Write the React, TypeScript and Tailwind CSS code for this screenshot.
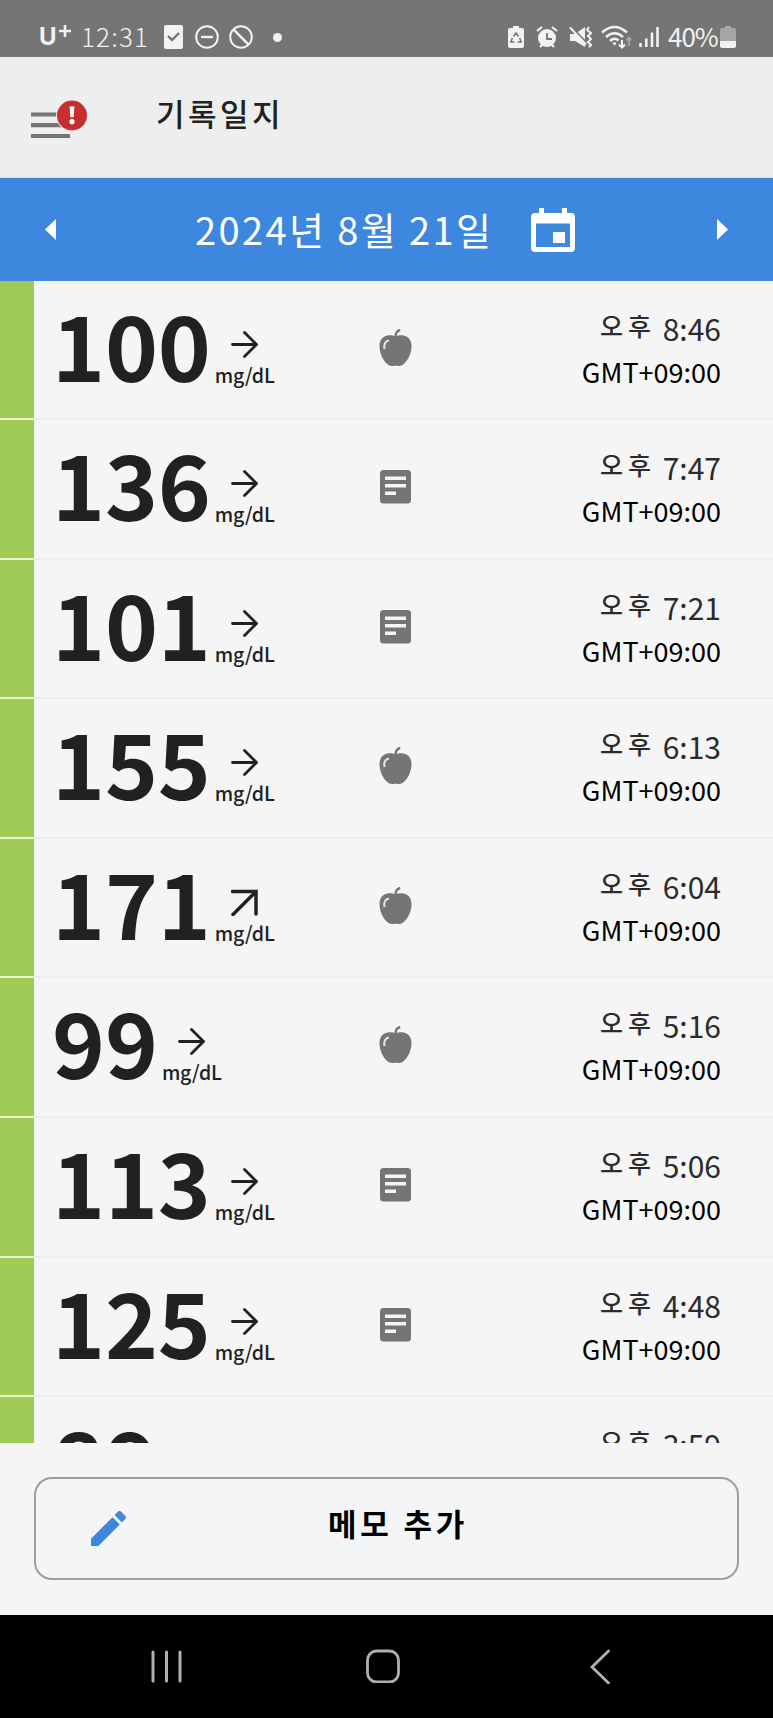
import React from 'react';

type Trend = 'flat' | 'up';
type Kind = 'food' | 'note';

interface Reading {
  value: number;
  trend: Trend;
  kind: Kind;
  time: string;
}

const readings: Reading[] = [
  { value: 100, trend: 'flat', kind: 'food', time: '8:46' },
  { value: 136, trend: 'flat', kind: 'note', time: '7:47' },
  { value: 101, trend: 'flat', kind: 'note', time: '7:21' },
  { value: 155, trend: 'flat', kind: 'food', time: '6:13' },
  { value: 171, trend: 'up', kind: 'food', time: '6:04' },
  { value: 99, trend: 'flat', kind: 'food', time: '5:16' },
  { value: 113, trend: 'flat', kind: 'note', time: '5:06' },
  { value: 125, trend: 'flat', kind: 'note', time: '4:48' },
  { value: 89, trend: 'flat', kind: 'food', time: '3:59' },
];

function StatusBar() {
  return (
    <div className="h-[57px] shrink-0 bg-[#757575] text-[#f2f2f2] flex items-start pl-[39px] pr-[37px] pt-[23px]">
      <div className="flex h-7 items-center">
        <span className="font-['Inter'] w-[20px] text-[24px] font-bold leading-7">U</span>
        <svg className="-mt-3 w-[12px] h-[12px]" viewBox="0 0 12 12" stroke="currentColor" strokeWidth="2.6">
          <path d="M6 0v12M0 6h12" />
        </svg>
        <span className="-mt-[3px] ml-[10px] w-[66px] text-[26px] font-light leading-7 tracking-[1.2px]">12:31</span>
        <svg className="ml-[17px] w-[19px] h-6" viewBox="0 0 19 24">
          <rect width="19" height="24" rx="2" fill="currentColor" />
          <path d="M4 11l4 4 7-7" fill="none" stroke="#757575" strokeWidth="2.4" />
        </svg>
        <svg className="ml-[12px] w-6 h-6" viewBox="0 0 24 24" fill="none" stroke="currentColor" strokeWidth="2">
          <circle cx="12" cy="12" r="10.8" />
          <path d="M6 12h12" strokeWidth="2.4" />
        </svg>
        <svg className="ml-[10px] w-6 h-6" viewBox="0 0 24 24" fill="none" stroke="currentColor" strokeWidth="2">
          <circle cx="12" cy="12" r="10.8" />
          <path d="M4.4 4.4l15.2 15.2" strokeWidth="2.4" />
        </svg>
        <span className="ml-[20px] w-[9px] h-[9px] rounded-full bg-[#f2f2f2]" />
      </div>
      <div className="ml-auto flex h-7 items-center">
        <svg className="w-4 h-6" viewBox="0 0 16 24">
          <path d="M5 1h6v2h3a2 2 0 0 1 2 2v16a2 2 0 0 1-2 2H2a2 2 0 0 1-2-2V5a2 2 0 0 1 2-2h3z" fill="currentColor" />
          <path d="M5.5 11.5L8 8l2.5 3.5M11.6 13l1.6 4H9.5M6.5 17H2.8l1.6-4" fill="none" stroke="#757575" strokeWidth="1.5" />
        </svg>
        <svg className="ml-[12px] w-[22px] h-6" viewBox="0 0 22 24">
          <circle cx="11" cy="13" r="9" fill="currentColor" />
          <path d="M1 6l5-4M21 6l-5-4M4 22l3-3M18 22l-3-3" stroke="currentColor" strokeWidth="2.2" />
          <path d="M11 8v6h5" fill="none" stroke="#757575" strokeWidth="1.8" />
        </svg>
        <svg className="ml-[11px] w-[23px] h-6" viewBox="0 0 23 24">
          <path d="M1 9h5l10-7v20L6 16H1z" fill="currentColor" />
          <path d="M1.500 1l17 18" stroke="#757575" strokeWidth="2.200" />
          <path d="M1 2.500l16 17" stroke="currentColor" strokeWidth="2" />
          <path d="M20 2l-2 3 4 3-3 3 3 3-3 3 3 3-2 2" fill="none" stroke="currentColor" strokeWidth="2" />
        </svg>
        <svg className="ml-[9px] w-[31px] h-6" viewBox="0 0 31 24" fill="none" stroke="currentColor" strokeWidth="2.4">
          <path d="M1 7.500q12.500-11 25 0M5 12q8.500-7.500 17 0M9 16q4.500-4 8.500-.5" />
          <circle cx="13.500" cy="18.500" r="1.600" fill="currentColor" stroke="none" />
          <path d="M21 15v7M18 19.500l3 3 3-3" strokeWidth="2" />
          <path d="M28 21v-8M25.500 15.500l2.500-3 2.500 3" stroke="#a6a6a6" strokeWidth="1.8" />
        </svg>
        <svg className="ml-[7px] w-[20px] h-6" viewBox="0 0 20 24" stroke="currentColor" strokeWidth="2.6">
          <path d="M1.500 18v4M7.300 13.500v8.500M13 7.500v14.500M18.500 2v20" />
        </svg>
        <span className="-mt-[3px] ml-[9px] w-[48px] whitespace-nowrap text-[26px] leading-7 tracking-[-1px]">40%</span>
        <svg className="ml-[4px] w-4 h-6" viewBox="0 0 16 24">
          <path d="M5 1h6v2h3a2 2 0 0 1 2 2v11H0V5a2 2 0 0 1 2-2h3z" fill="#a6a6a6" />
          <path d="M0 16h16v5a2 2 0 0 1-2 2H2a2 2 0 0 1-2-2z" fill="currentColor" />
        </svg>
      </div>
    </div>
  );
}

function TitleBar() {
  return (
    <header className="h-[121px] shrink-0 bg-[#eeeeee] border-b border-[#cfe2f5] flex items-start pl-[31px]">
      <svg className="mt-[42px] w-[57px] h-[40px]" viewBox="0 0 57 40">
        <path d="M0 15.500h30M0 26.200h34M0 37h39" stroke="#757575" strokeWidth="4.200" />
        <circle cx="41" cy="16.500" r="16" fill="#eeeeee" />
        <circle cx="41" cy="16.500" r="15" fill="#c4302d" />
        <path d="M38.600 7.500h4.800l-.8 10.800h-3.200z" fill="#fff" />
        <circle cx="41" cy="22.700" r="2.600" fill="#fff" />
      </svg>
      <h1 className="ml-[68px] mt-[36px] text-[31px] leading-[40px] font-medium tracking-[3.5px] text-[#222]">기록일지</h1>
    </header>
  );
}

function DateBar() {
  return (
    <div className="h-[103px] shrink-0 bg-[#3d87df] text-white flex items-center pl-[45px] pr-[45px]">
      <svg className="w-[11px] h-[21px]" viewBox="0 0 11 21">
        <path d="M11 0v21L0 10.500z" fill="currentColor" />
      </svg>
      <div className="-mt-[2px] ml-[139px] w-[296px] whitespace-nowrap text-[38px] leading-[56px] tracking-[2.4px]">
        2024년 8월 21일
      </div>
      <svg className="ml-[40px] w-[44px] h-[44px]" viewBox="0 0 44 44">
        <path
          fillRule="evenodd"
          d="M8 0h5v5h18V0h5v5h4a4 4 0 0 1 4 4v31a4 4 0 0 1-4 4H4a4 4 0 0 1-4-4V9a4 4 0 0 1 4-4h4zM5 15.500V39h34V15.500zM22 24h12v11H22z"
          fill="currentColor"
        />
      </svg>
      <svg className="ml-auto w-[11px] h-[21px]" viewBox="0 0 11 21">
        <path d="M0 0v21l11-10.500z" fill="currentColor" />
      </svg>
    </div>
  );
}

function TrendArrow({ trend }: { trend: Trend }) {
  return (
    <svg className="w-[27px] h-[27px]" viewBox="0 0 27 27" fill="none" stroke="#212121" strokeWidth="2.800">
      {trend === 'flat' ? (
        <path d="M1.500 13.500H25M13.500 1.500l12 12-12 12" strokeLinecap="round" />
      ) : (
        <path d="M1.500 2.500H25V25M25 2.500L2 25.500" strokeWidth="3.500" strokeLinecap="round" />
      )}
    </svg>
  );
}

function KindIcon({ kind }: { kind: Kind }) {
  if (kind === 'note') {
    return (
      <svg className="ml-[1px] w-[31px] h-[34px]" viewBox="0 0 31 34">
        <rect width="31" height="33.500" rx="3.500" fill="#757575" />
        <path d="M5 8.200h21M5 15.800h21M5 23.300h11" stroke="#f5f5f5" strokeWidth="3.500" />
      </svg>
    );
  }
  return (
    <svg className="-mt-[2px] w-[33px] h-[38px]" viewBox="0 0 33 38">
      <path
        d="M16.500 7.300c2-.9 5-1.400 8-.9 5.200.9 8 5 8 10.600 0 8-4 15.500-9 19-2 1.400-5 1.200-7 .4-2 .8-5 1-7-.4C4.500 32.500.500 25 .500 17c0-5.600 2.800-9.700 8-10.600 3-.5 6 0 8 .9z"
        fill="#757575"
      />
      <path d="M16.500 8c0-4 1.200-6.300 4.700-7" fill="none" stroke="#757575" strokeWidth="2.400" />
      <path d="M5.500 20c-.8-4.500.5-8 4.500-8.500" fill="none" stroke="#e4e4e4" strokeWidth="2" />
    </svg>
  );
}

function ReadingRow({ reading }: { reading: Reading }) {
  return (
    <li className="h-[139.600px] first:h-[139px] shrink-0 flex">
      <div className="w-[34px] bg-[#9ecb55] border-b-2 border-[#e8f3d6]" />
      <div className="flex-1 flex border-b-2 border-[#ededed] pl-[18px] pr-[52px]">
        <div className="w-[327px] flex">
          <span className="mt-[10px] text-[90px] leading-[104px] font-bold tracking-[-0.2px] text-[#212121]">{reading.value}</span>
          <div className="ml-[4px] mt-[50px] w-[60px] flex flex-col items-center">
            <TrendArrow trend={reading.trend} />
            <span className="mt-[3px] text-[19.500px] leading-7 font-medium tracking-[-0.2px] text-[#212121]">mg/dL</span>
          </div>
        </div>
        <div className="mt-[50px] w-[34px]">
          <KindIcon kind={reading.kind} />
        </div>
        <div className="ml-auto text-right whitespace-nowrap">
          <p className="mt-[25px] text-[30px] leading-[44px] text-[#2b2b2b]">
            <span className="inline-block leading-none text-[25px] font-medium tracking-[5px] align-[5px]">오후</span> {reading.time}
          </p>
          <p className="text-[27px] leading-[43px] text-black">GMT+09:00</p>
        </div>
      </div>
    </li>
  );
}

function NavBar() {
  return (
    <nav className="flex-1 bg-black flex items-start pt-[34px] pl-[151px] text-[#b0b0b0]">
      <svg className="w-[31px] h-[34px]" viewBox="0 0 31 34" stroke="currentColor" strokeWidth="3" strokeLinecap="round">
        <path d="M2 3v29M15.500 3v29M29 3v29" />
      </svg>
      <svg className="ml-[184px] w-[34px] h-[34px]" viewBox="0 0 34 34" fill="none" stroke="currentColor" strokeWidth="2.800">
        <rect x="1.500" y="2" width="31" height="31" rx="9" />
      </svg>
      <svg className="ml-[190px] w-[20px] h-[35px]" viewBox="0 0 20 35" fill="none" stroke="currentColor" strokeWidth="2.800" strokeLinecap="round">
        <path d="M18.500 2L2 18l16.500 16" />
      </svg>
    </nav>
  );
}

function App() {
  return (
    <div className="w-[773px] h-[1718px] flex flex-col overflow-hidden bg-[#f5f5f5] font-['Noto_Sans_CJK_KR',sans-serif]">
      <StatusBar />
      <TitleBar />
      <DateBar />
      <ul className="h-[1162px] shrink-0 flex flex-col overflow-hidden">
        {readings.map((reading) => (
          <ReadingRow key={reading.time} reading={reading} />
        ))}
      </ul>
      {/* Bouton d'ajout */}
      <div className="h-[172px] shrink-0 pt-[34px] px-[34px]">
        <button className="w-[705px] h-[103px] rounded-[18px] border-2 border-[#9e9e9e] bg-[#f3f5f7] flex items-start">
          <svg className="ml-[55px] mt-[32px] w-[35px] h-[35px]" viewBox="3 3 18 18" fill="#3d87df">
            <path d="M3 17.250V21h3.750L17.810 9.940l-3.750-3.750L3 17.250zM20.710 7.040a1 1 0 0 0 0-1.410l-2.340-2.340a1 1 0 0 0-1.410 0l-1.830 1.830 3.750 3.750 1.830-1.830z" />
          </svg>
          <span className="ml-[202px] mt-[22px] text-[31px] leading-[44px] font-bold tracking-[3.800px] text-black">메모 추가</span>
        </button>
      </div>
      <NavBar />
    </div>
  );
}

export default App;
